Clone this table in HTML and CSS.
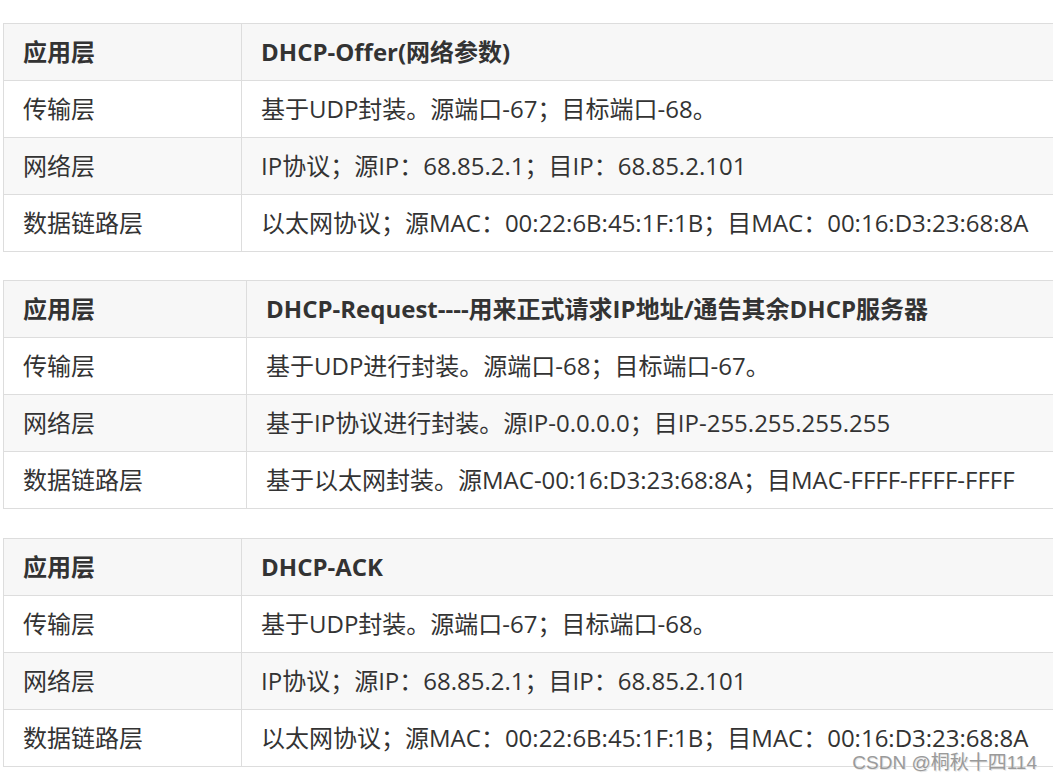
FILE: index.html
```html
<!DOCTYPE html>
<html lang="zh-CN">
<head>
<meta charset="utf-8">
<title>DHCP</title>
<link rel="stylesheet" href="styles.css">
</head>
<body>
<div class="page">
  <table class="grid t1">
    <colgroup><col class="c1"><col></colgroup>
    <thead><tr><th>应用层</th><th>DHCP-Offer(网络参数)</th></tr></thead>
    <tbody>
      <tr><td>传输层</td><td>基于UDP封装。源端口-67；目标端口-68。</td></tr>
      <tr><td>网络层</td><td>IP协议；源IP：68.85.2.1；目IP：68.85.2.101</td></tr>
      <tr><td>数据链路层</td><td>以太网协议；源MAC：00:22:6B:45:1F:1B；目MAC：00:16:D3:23:68:8A</td></tr>
    </tbody>
  </table>
  <table class="grid t2">
    <colgroup><col class="c1"><col></colgroup>
    <thead><tr><th>应用层</th><th>DHCP-Request----用来正式请求IP地址/通告其余DHCP服务器</th></tr></thead>
    <tbody>
      <tr><td>传输层</td><td>基于UDP进行封装。源端口-68；目标端口-67。</td></tr>
      <tr><td>网络层</td><td>基于IP协议进行封装。源IP-0.0.0.0；目IP-255.255.255.255</td></tr>
      <tr><td>数据链路层</td><td>基于以太网封装。源MAC-00:16:D3:23:68:8A；目MAC-FFFF-FFFF-FFFF</td></tr>
    </tbody>
  </table>
  <table class="grid t3">
    <colgroup><col class="c1"><col></colgroup>
    <thead><tr><th>应用层</th><th>DHCP-ACK</th></tr></thead>
    <tbody>
      <tr><td>传输层</td><td>基于UDP封装。源端口-67；目标端口-68。</td></tr>
      <tr><td>网络层</td><td>IP协议；源IP：68.85.2.1；目IP：68.85.2.101</td></tr>
      <tr><td>数据链路层</td><td>以太网协议；源MAC：00:22:6B:45:1F:1B；目MAC：00:16:D3:23:68:8A</td></tr>
    </tbody>
  </table>
  <div class="watermark">CSDN @桐秋十四114</div>
</div>
</body>
</html>
```
FILE: styles.css
```css
html, body {
  margin: 0;
  padding: 0;
  background: #fff;
  overflow: hidden;
}
.page {
  position: relative;
  width: 1053px;
  height: 782px;
  overflow: hidden;
  padding: 23px 0 0 3px;
  box-sizing: border-box;
  font-family: "Open Sans", "Noto Sans CJK SC", sans-serif;
  font-size: 24px;
  color: #333;
}
.grid {
  border-collapse: collapse;
  table-layout: fixed;
  width: 1100px;
  margin-bottom: 28px;
}
.t2 { margin-bottom: 29px; }
.t1 .c1, .t3 .c1 { width: 238px; }
.t2 .c1 { width: 243px; }
.grid th, .grid td {
  border: 1px solid #dddddd;
  height: 57px;
  padding: 0 19px;
  box-sizing: border-box;
  text-align: left;
  vertical-align: middle;
  white-space: nowrap;
  line-height: 1.15;
}
.grid th {
  font-weight: 700;
  background: #f7f7f7;
}
.grid tbody tr:nth-child(2) td {
  background: #f8f8f8;
}
.watermark {
  position: absolute;
  right: 16px;
  bottom: 10px;
  line-height: 1;
  font-family: "Liberation Sans", "Noto Sans CJK SC", sans-serif;
  font-size: 19px;
  color: #9a9a9a;
  text-shadow: 1px 1px 0 #e6e6e6;
}
```
